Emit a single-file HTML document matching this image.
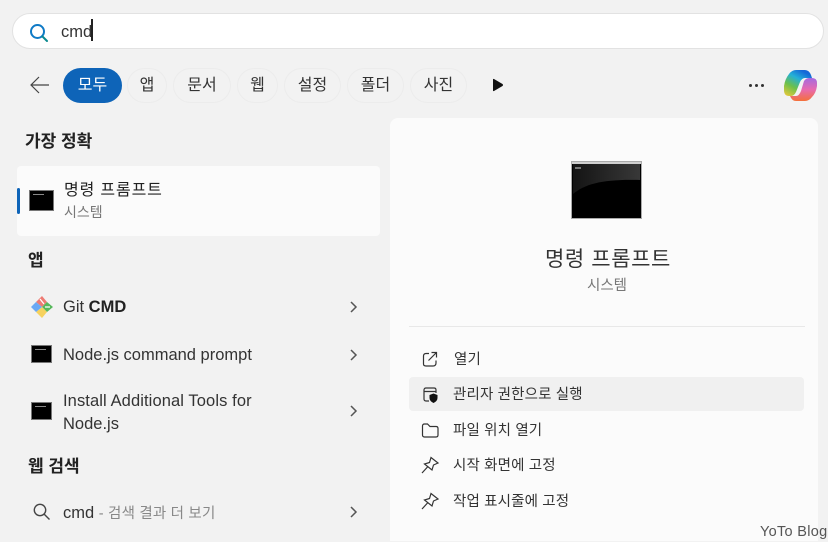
<!DOCTYPE html>
<html lang="ko"><head><meta charset="utf-8"><style>
html,body{margin:0;padding:0}
body{width:828px;height:541px;overflow:hidden;background:#f2f2f2;position:relative;font-family:"Liberation Sans","Noto Sans CJK KR",sans-serif;color:#1c1c1c}
.a,.t,.chip{position:absolute}
.t{white-space:nowrap;line-height:20px}
.chip{top:68px;height:35px;border-radius:18px;border:1px solid #ececec;box-sizing:border-box;text-align:center;line-height:33px;font-size:16px;color:#333}
.h{font-size:17px;font-weight:700;color:#222}
.m{font-size:14.5px;color:#333;letter-spacing:.15px}
.l{font-size:16.5px;color:#333}
svg{position:absolute;overflow:visible}
.cmd{position:absolute;left:31px;width:21px;height:18px;background:#000;border:1px solid #777;box-sizing:border-box}
.cmd:before{content:"";position:absolute;left:3px;top:3px;width:11px;height:1px;background:#888}
.chev{left:349px;width:9px;height:12px}
</style></head><body>
<div class="a" style="left:12px;top:13px;width:812px;height:36px;border-radius:18px;background:#fff;border:1px solid #e2e2e2;box-sizing:border-box"></div>
<svg style="left:28px;top:22px" width="22" height="22" viewBox="0 0 22 22" fill="none"><circle cx="9.5" cy="9.5" r="6.5" stroke="#0f7ac6" stroke-width="2"/><path d="M14.5 14.5L19 19" stroke="#0b8a8f" stroke-width="2" stroke-linecap="round"/></svg>
<div class="t" style="left:61px;top:22px;font-size:16.5px;color:#333">cmd</div>
<div class="a" style="left:91px;top:19px;width:1.5px;height:22px;background:#222"></div>
<svg style="left:30px;top:76px" width="20" height="18" viewBox="0 0 20 18" fill="none"><path d="M19 9H1M9 1L1 9L9 17" stroke="#444" stroke-width="1.2"/></svg>
<div class="chip" style="left:63px;width:59px;background:#0e64b8;color:#fff;border:0;line-height:35px">모두</div>
<div class="chip" style="left:127px;width:40px">앱</div>
<div class="chip" style="left:173px;width:58px">문서</div>
<div class="chip" style="left:237px;width:41px">웹</div>
<div class="chip" style="left:284px;width:57px">설정</div>
<div class="chip" style="left:347px;width:57px">폴더</div>
<div class="chip" style="left:410px;width:57px">사진</div>
<svg style="left:492px;top:78px" width="12" height="14" viewBox="0 0 12 14"><path d="M1 1.5Q1 .5 2 1L10.5 6Q11.5 7 10.5 8L2 13Q1 13.5 1 12.5Z" fill="#111"/></svg>
<div class="a" style="left:749px;top:84px;width:3px;height:3px;background:#333;border-radius:50%;box-shadow:6px 0 #333,12px 0 #333"></div>
<svg style="left:783px;top:69px" width="35" height="33" viewBox="0 0 35 33"><defs><linearGradient id="g1" x1="0" y1="1" x2=".6" y2="0"><stop offset="0" stop-color="#f4c93a"/><stop offset=".4" stop-color="#6cc04a"/><stop offset=".72" stop-color="#24b0d8"/><stop offset="1" stop-color="#1668d8"/></linearGradient><linearGradient id="g2" x1=".5" y1="0" x2=".5" y2="1"><stop offset="0" stop-color="#a46ae0"/><stop offset=".5" stop-color="#e86ab0"/><stop offset="1" stop-color="#f4703a"/></linearGradient></defs><path d="M13 1H22Q26 1 28 6L29 9H22Q19 9 17 13L13 23Q11 27 8 27H6Q1 27 1 21V17Q2 10 6 5Q9 1 13 1Z" fill="url(#g1)"/><path d="M22 32H13Q9 32 7 27H13Q16 27 18 22L21 12Q23 9 26 9H29Q34 9 34 14V17Q33 24 29 28Q26 32 22 32Z" fill="url(#g2)"/></svg>
<div class="t h" style="left:25px;top:132px">가장 정확</div>
<div class="a" style="left:17px;top:166px;width:363px;height:70px;background:#fbfbfb;border-radius:4px"></div>
<div class="a" style="left:17px;top:188px;width:3px;height:26px;background:#0e64b8;border-radius:2px"></div>
<div class="cmd" style="left:29px;top:190px;width:25px;height:21px"></div>
<div class="t" style="left:64px;top:181px;font-size:16px;color:#222;letter-spacing:.85px">명령 프롬프트</div>
<div class="t" style="left:64px;top:202px;font-size:14px;color:#777">시스템</div>
<div class="t h" style="left:28px;top:251px">앱</div>
<svg style="left:30px;top:295px" width="24" height="24" viewBox="0 0 24 24"><path d="M12 1L17 7 12 12 6 7Z" fill="#ee7b73"/><path d="M12 12L17 7 23 12 17 17Z" fill="#57b85b"/><path d="M12 12L17 17 12 23 6 17Z" fill="#f6d25f"/><path d="M1 12L6 7 12 12 6 17Z" fill="#6aa9f4"/><path d="M10 4L14 9M15 12H20" stroke="#fff" stroke-width="1.2"/></svg>
<div class="t l" style="left:63px;top:297px">Git <b style="color:#222">CMD</b></div>
<div class="cmd" style="top:345px"></div>
<div class="t l" style="left:63px;top:345px">Node.js command prompt</div>
<div class="cmd" style="top:402px"></div>
<div class="t l" style="left:63px;top:391px;letter-spacing:.1px">Install Additional Tools for</div>
<div class="t l" style="left:63px;top:414px">Node.js</div>
<div class="t h" style="left:28px;top:457px">웹 검색</div>
<svg style="left:33px;top:503px" width="18" height="18" viewBox="0 0 18 18" fill="none"><circle cx="7" cy="7" r="5.7" stroke="#444" stroke-width="1.4"/><path d="M11 11L16.5 16.5" stroke="#444" stroke-width="1.4"/></svg>
<div class="t" style="left:63px;top:503px;font-size:16.5px;color:#333">cmd <span style="font-size:14.5px;color:#888;letter-spacing:.2px">- 검색 결과 더 보기</span></div>
<svg class="chev" style="top:301px" viewBox="0 0 9 12" fill="none"><path d="M2 1L7 6 2 11" stroke="#555" stroke-width="1.5"/></svg>
<svg class="chev" style="top:349px" viewBox="0 0 9 12" fill="none"><path d="M2 1L7 6 2 11" stroke="#555" stroke-width="1.5"/></svg>
<svg class="chev" style="top:405px" viewBox="0 0 9 12" fill="none"><path d="M2 1L7 6 2 11" stroke="#555" stroke-width="1.5"/></svg>
<svg class="chev" style="top:506px" viewBox="0 0 9 12" fill="none"><path d="M2 1L7 6 2 11" stroke="#555" stroke-width="1.5"/></svg>
<div class="a" style="left:390px;top:118px;width:428px;height:423px;background:#fbfbfb;border-radius:8px 8px 0 0"></div>
<svg style="left:571px;top:161px" width="71" height="58" viewBox="0 0 71 58"><defs><linearGradient id="g3" x1="0" y1="0" x2="1" y2="0"><stop offset="0" stop-color="#141414"/><stop offset="1" stop-color="#383838"/></linearGradient></defs><rect x=".5" y=".5" width="70" height="57" fill="#000" stroke="#aaa"/><rect x="1" y="1" width="69" height="2" fill="#d0d0d0"/><rect x="2" y="3" width="67" height="53" fill="url(#g3)"/><path d="M2 33C15 22 35 18 69 19V56H2Z" fill="#000"/><path d="M4 7H10" stroke="#777" stroke-width="2"/></svg>
<div class="t" style="left:390px;width:436px;text-align:center;top:248px;font-size:21px;line-height:24px;color:#333;letter-spacing:.6px">명령 프롬프트</div>
<div class="t" style="left:390px;width:434px;text-align:center;top:276px;font-size:14.5px;color:#777">시스템</div>
<div class="a" style="left:409px;top:326px;width:396px;height:1px;background:#e8e8e8"></div>
<div class="a" style="left:409px;top:377px;width:395px;height:34px;background:#f0f0f0;border-radius:4px"></div>
<svg style="left:421px;top:350px" width="18" height="18" viewBox="0 0 18 18" fill="none" stroke="#333" stroke-width="1.2"><path d="M8 3.5H5Q2.5 3.5 2.500 6V14Q2.500 16 5 16H12Q15 16 15 13V10.500"/><path d="M7.500 10.500L15.500 2.500M10.500 2.500H15.500V7.500"/></svg>
<div class="t m" style="left:454px;top:350px">열기</div>
<svg style="left:421px;top:385px" width="18" height="18" viewBox="0 0 18 18" fill="none"><path d="M8 16H5Q3 16 3 14V5Q3 3 5 3H13Q15 3 15 5V8M3 6.500H15" stroke="#333" stroke-width="1.2"/><path d="M8.500 10L12.500 8.500 16.500 10V13Q16.500 16 12.500 18 8.500 16 8.500 13Z" fill="#111"/></svg>
<div class="t m" style="left:453px;top:385px">관리자 권한으로 실행</div>
<svg style="left:421px;top:421px" width="18" height="18" viewBox="0 0 18 18" fill="none" stroke="#333" stroke-width="1.2"><path d="M1.500 5Q1.500 3 3.500 3H6.500L9 5.500H15Q17 5.500 17 7.500V14Q17 16 15 16H3.500Q1.500 16 1.500 14Z"/></svg>
<div class="t m" style="left:453px;top:421px">파일 위치 열기</div>
<svg style="left:421px;top:456px" width="18" height="18" viewBox="0 0 18 18" fill="none" stroke="#333" stroke-width="1.2"><path d="M10 1.500L17 7 12.500 9 11 14 3.500 8 8.500 6.500ZM6.500 11L1 17"/></svg>
<div class="t m" style="left:453px;top:456px">시작 화면에 고정</div>
<svg style="left:421px;top:492px" width="18" height="18" viewBox="0 0 18 18" fill="none" stroke="#333" stroke-width="1.2"><path d="M10 1.500L17 7 12.500 9 11 14 3.500 8 8.500 6.500ZM6.500 11L1 17"/></svg>
<div class="t m" style="left:453px;top:492px">작업 표시줄에 고정</div>
<div class="t" style="left:760px;top:522px;font-size:14.5px;color:#555;letter-spacing:.3px">YoTo Blog</div>
</body></html>
